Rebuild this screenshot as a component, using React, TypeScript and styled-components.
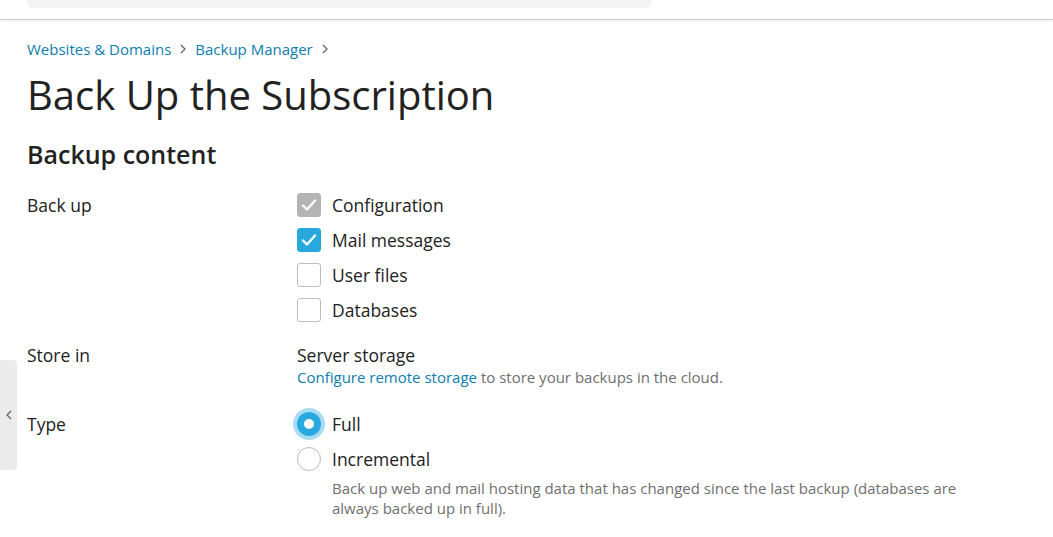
import styled, { createGlobalStyle } from 'styled-components';

const GlobalStyle = createGlobalStyle`
	html, body {
		margin: 0;
		padding: 0;
		background: #fff;
		font-family: 'Open Sans', 'Noto Sans', sans-serif;
		color: #222;
	}
	* { box-sizing: border-box; }
`;

const Header = styled.header`
	height: 20px;
	border-bottom: 1px solid #cfcfcf;
	box-shadow: 0 1px 2px rgba(0, 0, 0, 0.08);
	padding-left: 27px;
`;

const SearchBar = styled.div`
	width: 625px;
	height: 8px;
	background: #f3f3f3;
	border-radius: 0 0 6px 6px;
`;

const Main = styled.main`
	padding: 19px 28px 0 27px;
`;

const Breadcrumbs = styled.nav`
	display: flex;
	align-items: center;
	gap: 8px;
	font-size: 15px;
	line-height: 20px;
	a {
		color: #0e7eae;
		text-decoration: none;
	}
`;

const Sep = styled.span`
	display: inline-flex;
	color: #777;
`;

const Title = styled.h1`
	margin: 12px 0 0;
	font-size: 40px;
	line-height: 48px;
	font-weight: 400;
	color: #222;
`;

const Section = styled.h2`
	margin: 19px 0 0;
	font-size: 25px;
	line-height: 32px;
	font-weight: 600;
	color: #222;
`;

const Form = styled.div`
	margin-top: 23px;
	display: flex;
	flex-direction: column;
`;

const Row = styled.div<{ $gap?: number }>`
	display: grid;
	grid-template-columns: 270px 1fr;
	margin-top: ${(p) => p.$gap ?? 0}px;
`;

const Label = styled.div`
	font-size: 17.5px;
	line-height: 24px;
`;

const Field = styled.div`
	display: flex;
	flex-direction: column;
	gap: 11px;
`;

const Option = styled.label`
	display: flex;
	align-items: center;
	gap: 11px;
	font-size: 17.5px;
	line-height: 24px;
`;

const Box = styled.span<{ $state: 'disabled' | 'checked' | 'empty' }>`
	width: 24px;
	height: 24px;
	border-radius: 3px;
	display: inline-flex;
	align-items: center;
	justify-content: center;
	background: ${(p) =>
		p.$state === 'disabled' ? '#b4b4b4' : p.$state === 'checked' ? '#28a9de' : '#fff'};
	border: 1px solid
		${(p) => (p.$state === 'disabled' ? '#b4b4b4' : p.$state === 'checked' ? '#28a9de' : '#bdbdbd')};
`;

const Radio = styled.span<{ $on?: boolean }>`
	flex: none;
	width: 24px;
	height: 24px;
	border-radius: 50%;
	background: #fff;
	border: ${(p) => (p.$on ? '7px solid #29a8df' : '1px solid #b9b9b9')};
	box-shadow: ${(p) => (p.$on ? '0 0 0 4px #a9dcf3' : 'none')};
`;

const Plain = styled.div`
	font-size: 17.5px;
	line-height: 24px;
`;

const Note = styled.div<{ $indent?: boolean }>`
	font-size: 15px;
	line-height: 20px;
	color: #6f6f6f;
	max-width: ${(p) => (p.$indent ? '640px' : 'none')};
	margin-left: ${(p) => (p.$indent ? '35px' : '0')};
	margin-top: ${(p) => (p.$indent ? '-4px' : '0')};
	a {
		color: #0e7eae;
		text-decoration: none;
	}
`;

const SideTab = styled.div`
	position: absolute;
	left: 0;
	top: 360px;
	width: 17px;
	height: 110px;
	background: #ebebeb;
	border-radius: 0 4px 4px 0;
	display: flex;
	align-items: center;
	justify-content: center;
`;

const Check = () => (
	<svg width="20" height="20" viewBox="0 0 20 20">
		<path d="M4 10.5 L8 14.5 L16 5.5" fill="none" stroke="#fff" strokeWidth="2.4" strokeLinecap="round" strokeLinejoin="round" />
	</svg>
);

const Chevron = ({ dir }: { dir: 'left' | 'right' }) => (
	<svg width="8" height="12" viewBox="0 0 8 12">
		<path
			d={dir === 'right' ? 'M2 2 L6 6 L2 10' : 'M6 2 L2 6 L6 10'}
			fill="none"
			stroke="#666"
			strokeWidth="1.3"
		/>
	</svg>
);

const items: { name: string; state: 'disabled' | 'checked' | 'empty' }[] = [
	{ name: 'Configuration', state: 'disabled' },
	{ name: 'Mail messages', state: 'checked' },
	{ name: 'User files', state: 'empty' },
	{ name: 'Databases', state: 'empty' }
];

export default function App() {
	return (
		<>
			<GlobalStyle />
			<Header>
				<SearchBar />
			</Header>
			<Main>
				<Breadcrumbs>
					<a href="#">Websites &amp; Domains</a>
					<Sep>
						<Chevron dir="right" />
					</Sep>
					<a href="#">Backup Manager</a>
					<Sep>
						<Chevron dir="right" />
					</Sep>
				</Breadcrumbs>
				<Title>Back Up the Subscription</Title>
				<Section>Backup content</Section>
				<Form>
					<Row>
						<Label>Back up</Label>
						<Field>
							{items.map((i) => (
								<Option key={i.name}>
									<Box $state={i.state}>{i.state !== 'empty' && <Check />}</Box>
									{i.name}
								</Option>
							))}
						</Field>
					</Row>
					<Row $gap={21}>
						<Label>Store in</Label>
						<div>
							<Plain>Server storage</Plain>
							<Note>
								<a href="#">Configure remote storage</a> to store your backups in the cloud.
							</Note>
						</div>
					</Row>
					<Row $gap={25}>
						<Label>Type</Label>
						<Field>
							<Option>
								<Radio $on />
								Full
							</Option>
							<Option>
								<Radio />
								Incremental
							</Option>
							<Note $indent>
								Back up web and mail hosting data that has changed since the last backup (databases are always
								backed up in full).
							</Note>
						</Field>
					</Row>
				</Form>
			</Main>
			<SideTab>
				<Chevron dir="left" />
			</SideTab>
		</>
	);
}
